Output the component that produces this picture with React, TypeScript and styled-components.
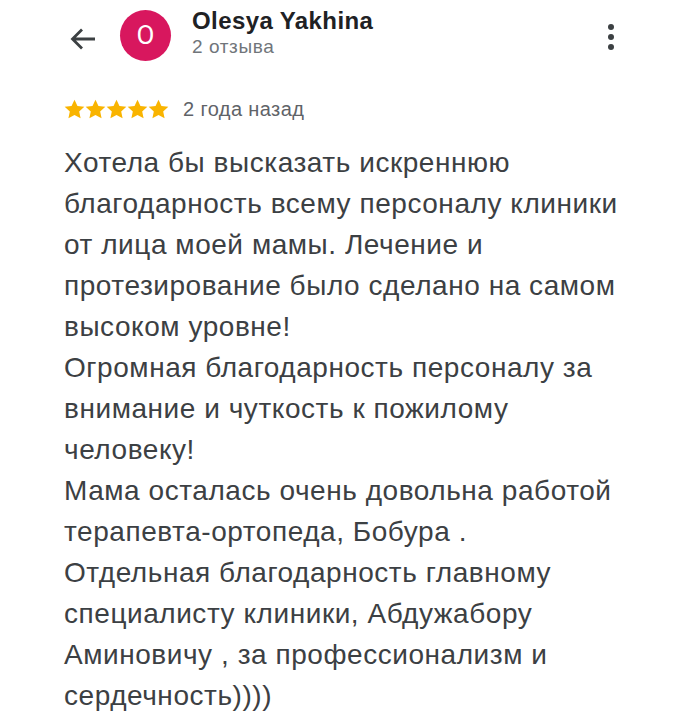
import React from "react";
import styled, { createGlobalStyle } from "styled-components";

const Global = createGlobalStyle`
  html, body { margin: 0; padding: 0; background: #ffffff; }
  body { font-family: "Liberation Sans", Arial, sans-serif; }
`;

const Page = styled.div`
  width: 694px;
  height: 716px;
  overflow: hidden;
  background: #fff;
  box-sizing: border-box;
  padding: 10px 0 0 0;
`;

const Header = styled.div`
  display: flex;
  align-items: center;
  height: 50px;
  padding: 0 80px 0 68px;
`;

const BackButton = styled.div`
  width: 30px;
  height: 30px;
  display: flex;
  align-items: center;
  justify-content: center;
  margin-right: 22px;
  margin-top: 7px;
`;

const Avatar = styled.div`
  width: 51px;
  height: 51px;
  border-radius: 50%;
  background: #d8175e;
  color: #fff;
  display: flex;
  align-items: center;
  justify-content: center;
  font-size: 26px;
  font-family: "Roboto", "Liberation Sans", sans-serif;
  flex-shrink: 0;
`;

const Who = styled.div`
  display: flex;
  flex-direction: column;
  margin-left: 21px;
  flex: 1;
  margin-top: -3px;
`;

const Name = styled.div`
  font-size: 24px;
  font-weight: 700;
  color: #202124;
  line-height: 26px;
  letter-spacing: 0.4px;
`;

const Sub = styled.div`
  font-size: 19px;
  color: #70757a;
  line-height: 25px;
  letter-spacing: 0.6px;
`;

const Menu = styled.div`
  display: flex;
  flex-direction: column;
  gap: 4px;
  margin-top: 4px;
`;

const Dot = styled.span`
  width: 6px;
  height: 6px;
  border-radius: 50%;
  background: #3c4043;
`;

const RatingRow = styled.div`
  display: flex;
  align-items: center;
  padding-left: 64px;
  margin-top: 37px;
  height: 24px;
`;

const Stars = styled.div`
  display: flex;
  margin-right: 14px;
`;

const When = styled.span`
  font-size: 20px;
  color: #5f6368;
  letter-spacing: 0.4px;
`;

const Body = styled.div`
  padding-left: 64px;
  margin-top: 21px;
  font-size: 28px;
  line-height: 41px;
  letter-spacing: 0.55px;
  color: #3c4043;
  white-space: pre;
`;

const Star = () => (
  <svg width="21" height="20" viewBox="0 0 24 23">
    <path
      d="M12 0.8l3.4 7.3 7.9 0.9-5.9 5.4 1.6 7.8L12 18.3l-7 3.9 1.6-7.8L0.7 9l7.9-0.9z"
      fill="#f9b400"
    />
  </svg>
);

const text = `Хотела бы высказать искреннюю
благодарность всему персоналу клиники
от лица моей мамы. Лечение и
протезирование было сделано на самом
высоком уровне!
Огромная благодарность персоналу за
внимание и чуткость к пожилому
человеку!
Мама осталась очень довольна работой
терапевта-ортопеда, Бобура .
Отдельная благодарность главному
специалисту клиники, Абдужабору
Аминовичу , за профессионализм и
сердечность))))`;

export default function App() {
  return (
    <Page>
      <Global />
      <Header>
        <BackButton>
          <svg width="26" height="22" viewBox="0 0 26 22">
            <path
              d="M25 11H3M12 1.5L2.5 11l9.5 9.5"
              stroke="#3c4043"
              strokeWidth="2.8"
              fill="none"
            />
          </svg>
        </BackButton>
        <Avatar>O</Avatar>
        <Who>
          <Name>Olesya Yakhina</Name>
          <Sub>2 отзыва</Sub>
        </Who>
        <Menu>
          <Dot />
          <Dot />
          <Dot />
        </Menu>
      </Header>
      <RatingRow>
        <Stars>
          <Star />
          <Star />
          <Star />
          <Star />
          <Star />
        </Stars>
        <When>2 года назад</When>
      </RatingRow>
      <Body>{text}</Body>
    </Page>
  );
}
